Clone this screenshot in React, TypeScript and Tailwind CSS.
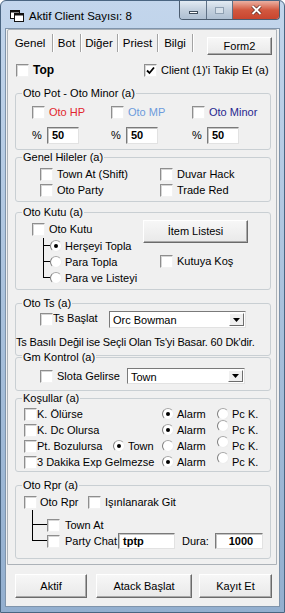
import React from 'react';

function CheckBox({ checked = false }: { checked?: boolean }) {
  return (
    <span className="flex items-center justify-center w-[13px] h-[13px] shrink-0 bg-white border border-t-[#8e8e8e] border-l-[#8e8e8e] border-r-[#f2f2f2] border-b-[#f2f2f2] shadow-[inset_1px_1px_0_#d6d6d6]">
      {checked && (
        <svg width="9" height="9" viewBox="0 0 9 9" aria-hidden="true">
          <path d="M1 4.5 L3.5 7 L8 1.5" fill="none" stroke="#000" strokeWidth="1.8" />
        </svg>
      )}
    </span>
  );
}

function Radio({ on = false, className = '' }: { on?: boolean; className?: string }) {
  return (
    <span
      className={`flex items-center justify-center w-[12px] h-[12px] shrink-0 rounded-full bg-white border border-[#ececec] border-l-[#7c7c7c] border-t-[#a8a8a8] ${className}`}
    >
      {on && <span className="w-[4px] h-[4px] rounded-full bg-black" />}
    </span>
  );
}

function Field({ value, className }: { value: string; className: string }) {
  return (
    <div
      className={`flex items-center pl-[4px] bg-white font-bold border border-t-[#7a7a7a] border-l-[#7a7a7a] border-r-[#e2e2e2] border-b-[#e2e2e2] shadow-[inset_1px_1px_0_#c4c4c4] ${className}`}
    >
      {value}
    </div>
  );
}

function Combo({ value, className }: { value: string; className: string }) {
  return (
    <div
      className={`flex bg-white border border-t-[#7a7a7a] border-l-[#7a7a7a] border-r-[#e2e2e2] border-b-[#e2e2e2] ${className}`}
    >
      <span className="flex-1 flex items-center pl-[3px] pt-[2px]">{value}</span>
      <span className="w-[15px] m-[1px] flex items-center justify-center bg-[#f0f0f0] border border-t-white border-l-white border-r-[#6d6d6d] border-b-[#6d6d6d]">
        <svg width="7" height="4" viewBox="0 0 7 4" aria-hidden="true">
          <path d="M0 0 H7 L3.5 4 Z" fill="#000" />
        </svg>
      </span>
    </div>
  );
}

function Button({ label, className }: { label: string; className: string }) {
  return (
    <div
      className={`flex items-center justify-center bg-gradient-to-b from-[#f7f7f7] to-[#e9e9e9] border border-t-white border-l-white border-r-[#6b6b6b] border-b-[#6b6b6b] shadow-[inset_-1px_-1px_0_#a9a9a9] ${className}`}
    >
      {label}
    </div>
  );
}

function Group({ title, className, children }: { title: string; className: string; children?: React.ReactNode }) {
  return (
    <div className={`relative ml-[7px] w-[256px] border border-[#c9cfd3] rounded-[3px] ${className}`}>
      <span className="absolute left-[6px] top-[-7px] px-[1px] leading-[13px] bg-[#f0f0f0] whitespace-nowrap">{title}</span>
      {children}
    </div>
  );
}

// tree connector for the nested rows
function Branch({ last = false, className = '' }: { last?: boolean; className?: string }) {
  return (
    <span className={`flex flex-col self-stretch shrink-0 ${className}`}>
      <span className="h-[8px] border-l border-b border-black" />
      <span className={last ? 'flex-1' : 'flex-1 border-l border-black'} />
    </span>
  );
}

const tabs = [
  { label: 'Genel', w: 'w-[44px]' },
  { label: 'Bot', w: 'w-[27px]' },
  { label: 'Diğer', w: 'w-[36px]' },
  { label: 'Priest', w: 'w-[39px]' },
  { label: 'Bilgi', w: 'w-[34px]' },
];

const conditions = [
  { label: 'K. Ölürse', town: false, alarm: true, pcUp: false },
  { label: 'K. Dc Olursa', town: false, alarm: true, pcUp: true },
  { label: 'Pt. Bozulursa', town: true, alarm: false, pcUp: true },
  { label: '3 Dakika Exp Gelmezse', town: false, alarm: true, pcUp: true },
];

export default function App() {
  return (
    <div className="w-[285px] h-[613px] flex flex-col overflow-hidden rounded-t-[6px] border border-[#4a6581] bg-gradient-to-b from-[#c3d6ec] via-[#a9c1dc] to-[#93afcf] font-['Liberation_Sans',Arial,sans-serif] text-[11px] text-black leading-[13px]">
      {/* Title bar */}
      <div className="h-[27px] flex items-start shrink-0">
        <svg className="ml-[9px] mt-[9px] shrink-0" width="14" height="12" viewBox="0 0 14 12" aria-hidden="true">
          <rect x="0.5" y="0.5" width="9" height="8" fill="#fff" stroke="#111" />
          <rect x="0.5" y="0.5" width="9" height="2" fill="#111" />
          <rect x="4.5" y="3.5" width="9" height="8" fill="#fff" stroke="#111" />
          <rect x="4.5" y="3.5" width="9" height="2" fill="#111" />
        </svg>
        <span className="ml-[5px] mt-[8px] text-[11.5px] leading-[14px] whitespace-nowrap">Aktif Client Sayısı: 8</span>
        <div className="ml-auto mr-[4px] flex h-[19px] rounded-b-[4px] border border-t-0 border-[#4c5d70] overflow-hidden">
          <div className="w-[27px] flex items-center justify-center bg-gradient-to-b from-[#e3ebf3] via-[#c3d0de] to-[#aebfd2] border-r border-[#5f7186]">
            <span className="w-[9px] h-[3px] mt-[4px] bg-white border border-[#3f4d5c]" />
          </div>
          <div className="w-[26px] flex items-center justify-center bg-gradient-to-b from-[#e3ebf3] via-[#c3d0de] to-[#aebfd2] border-r border-[#5f7186]">
            <span className="w-[9px] h-[7px] border border-[#8fa0b2] bg-[#d6e0ea]" />
          </div>
          <div className="w-[46px] flex items-center justify-center bg-gradient-to-b from-[#eab0a2] via-[#d2583f] to-[#c8452f]">
            <svg width="11" height="10" viewBox="0 0 11 10" aria-hidden="true">
              <path d="M1.5 1 L9.5 9 M9.5 1 L1.5 9" stroke="#4a1a12" strokeWidth="3.2" />
              <path d="M1.5 1 L9.5 9 M9.5 1 L1.5 9" stroke="#fff" strokeWidth="2" />
            </svg>
          </div>
        </div>
      </div>

      {/* Client area */}
      <div className="ml-[4px] w-[275px] h-[579px] shrink-0 bg-[#f0f0f0] border border-[#7f94ab] flex flex-col">
        <div className="ml-[1px] w-[270px] h-[536px] shrink-0 border border-[#acb2b8] rounded-tl-[2px] flex flex-col">
          {/* Tab strip */}
          <div className="h-[27px] flex items-start shrink-0">
            {tabs.map((t) => (
              <React.Fragment key={t.label}>
                <span className={`${t.w} mt-[3px] h-[20px] flex items-center justify-center shrink-0 text-[11.5px]`}>{t.label}</span>
                <span className="w-[1px] h-[18px] mt-[4px] bg-[#a3a3a3] shadow-[1px_0_0_#fff] shrink-0" />
              </React.Fragment>
            ))}
            <Button label="Form2" className="ml-auto mr-[4px] mt-[7px] w-[65px] h-[18px]" />
          </div>

          {/* Top row */}
          <div className="mt-[5px] h-[16px] flex items-center shrink-0">
            <div className="w-[136px] pl-[8px] flex items-center gap-[4px]">
              <CheckBox />
              <span className="font-bold text-[12px]">Top</span>
            </div>
            <div className="flex items-center gap-[4px]">
              <CheckBox checked />
              <span className="whitespace-nowrap">Client (1)'i Takip Et (a)</span>
            </div>
          </div>

          {/* Oto Pot */}
          <Group title="Oto Pot - Oto Minor (a)" className="mt-[15px] h-[57px] shrink-0">
            <div className="mt-[10px] pl-[16px] h-[16px] flex items-center">
              <div className="w-[79px] flex items-center gap-[4px]">
                <CheckBox />
                <span className="text-[#e2262e]">Oto HP</span>
              </div>
              <div className="w-[81px] flex items-center gap-[4px]">
                <CheckBox />
                <span className="text-[#6d9bdc]">Oto MP</span>
              </div>
              <div className="flex items-center gap-[4px]">
                <CheckBox />
                <span className="text-[#27268f]">Oto Minor</span>
              </div>
            </div>
            <div className="mt-[7px] pl-[16px] h-[17px] flex items-center">
              {['w-[79px]', 'w-[81px]', ''].map((w, i) => (
                <div key={i} className={`${w} flex items-center`}>
                  <span className="w-[15px]">%</span>
                  <Field value="50" className="w-[32px] h-[17px]" />
                </div>
              ))}
            </div>
          </Group>

          {/* Genel Hileler */}
          <Group title="Genel Hileler (a)" className="mt-[7px] h-[45px] shrink-0">
            <div className="mt-[8px] pl-[24px] grid grid-cols-[120px_1fr]">
              <div className="h-[16px] flex items-center gap-[4px]"><CheckBox /><span>Town At (Shift)</span></div>
              <div className="h-[16px] flex items-center gap-[4px]"><CheckBox /><span>Duvar Hack</span></div>
              <div className="h-[16px] flex items-center gap-[4px]"><CheckBox /><span>Oto Party</span></div>
              <div className="h-[16px] flex items-center gap-[4px]"><CheckBox /><span>Trade Red</span></div>
            </div>
          </Group>

          {/* Oto Kutu */}
          <Group title="Oto Kutu (a)" className="mt-[10px] h-[78px] shrink-0">
            <div className="mt-[7px] pl-[16px] flex">
              <div className="w-[111px] flex flex-col">
                <div className="mt-[1px] h-[16px] flex items-center gap-[4px]"><CheckBox /><span>Oto Kutu</span></div>
                <div className="ml-[11px] mt-[1px] flex flex-col">
                  {['Herşeyi Topla', 'Para Topla', 'Para ve Listeyi'].map((r, i) => (
                    <div key={r} className="h-[16px] flex items-center">
                      <Branch last={i === 2} className="w-[7px]" />
                      <Radio on={i === 0} />
                      <span className="ml-[3px] whitespace-nowrap">{r}</span>
                    </div>
                  ))}
                </div>
              </div>
              <div className="flex flex-col">
                <Button label="İtem Listesi" className="w-[105px] h-[23px]" />
                <div className="mt-[10px] ml-[17px] h-[16px] flex items-center gap-[4px]"><CheckBox /><span>Kutuya Koş</span></div>
              </div>
            </div>
          </Group>

          {/* Oto Ts */}
          <Group title="Oto Ts (a)" className="mt-[13px] h-[53px] shrink-0">
            <div className="mt-[7px] pl-[24px] h-[17px] flex items-center">
              <CheckBox />
              <span className="w-[56px] mb-[3px]">Ts Başlat</span>
              <Combo value="Orc Bowman" className="w-[137px] h-[17px]" />
            </div>
            <div className="mt-[7px] h-[14px] flex items-center whitespace-nowrap tracking-[-0.15px]">
              Ts Basılı Değil ise Seçli Olan Ts'yi Basar. 60 Dk'dir.
            </div>
          </Group>

          {/* Gm Kontrol */}
          <Group title="Gm Kontrol (a)" className="mt-[1px] h-[34px] shrink-0">
            <div className="mt-[10px] pl-[24px] h-[16px] flex items-center">
              <div className="w-[87px] flex items-center gap-[4px]"><CheckBox /><span>Slota Gelirse</span></div>
              <Combo value="Town" className="w-[118px] h-[16px]" />
            </div>
          </Group>

          {/* Koşullar */}
          <Group title="Koşullar (a)" className="mt-[7px] h-[74px] shrink-0">
            <div className="mt-[7px] pl-[8px] flex flex-col">
              {conditions.map((c) => (
                <div key={c.label} className="h-[16px] flex items-center">
                  <div className="w-[89px] flex items-center">
                    <CheckBox />
                    <span className="whitespace-nowrap">{c.label}</span>
                  </div>
                  <div className="w-[49px] flex items-center">
                    {c.town && (
                      <>
                        <Radio on />
                        <span className="ml-[3px]">Town</span>
                      </>
                    )}
                  </div>
                  <div className="w-[55px] flex items-center">
                    <Radio on={c.alarm} />
                    <span className="ml-[3px]">Alarm</span>
                  </div>
                  <div className="flex items-center">
                    <Radio className={c.pcUp ? 'mb-[8px]' : ''} />
                    <span className="ml-[3px]">Pc K.</span>
                  </div>
                </div>
              ))}
            </div>
          </Group>

          {/* Oto Rpr */}
          <Group title="Oto Rpr (a)" className="mt-[13px] h-[74px] shrink-0">
            <div className="mt-[8px] pl-[8px] h-[16px] flex items-center">
              <div className="w-[64px] flex items-center gap-[3px]"><CheckBox /><span>Oto Rpr</span></div>
              <div className="flex items-center gap-[4px]"><CheckBox /><span>Işınlanarak Git</span></div>
            </div>
            <div className="pl-[16px] flex flex-col">
              <span className="h-[7px] border-l border-black" />
              <div className="h-[16px] flex items-center">
                <Branch className="w-[15px]" />
                <CheckBox />
                <span className="ml-[5px]">Town At</span>
              </div>
              <div className="h-[16px] flex items-center">
                <Branch last className="w-[15px]" />
                <CheckBox />
                <span className="ml-[5px] w-[53px] whitespace-nowrap">Party Chat</span>
                <Field value="tptp" className="w-[57px] h-[16px]" />
                <span className="ml-[7px] w-[33px]">Dura:</span>
                <Field value="1000" className="w-[48px] h-[16px] justify-center pl-0" />
              </div>
            </div>
          </Group>
        </div>

        {/* Bottom buttons */}
        <div className="mt-[9px] ml-[9px] flex items-center">
          <Button label="Aktif" className="w-[72px] h-[24px]" />
          <Button label="Atack Başlat" className="ml-[9px] w-[96px] h-[24px]" />
          <Button label="Kayıt Et" className="ml-[7px] w-[73px] h-[24px]" />
        </div>
      </div>
    </div>
  );
}
